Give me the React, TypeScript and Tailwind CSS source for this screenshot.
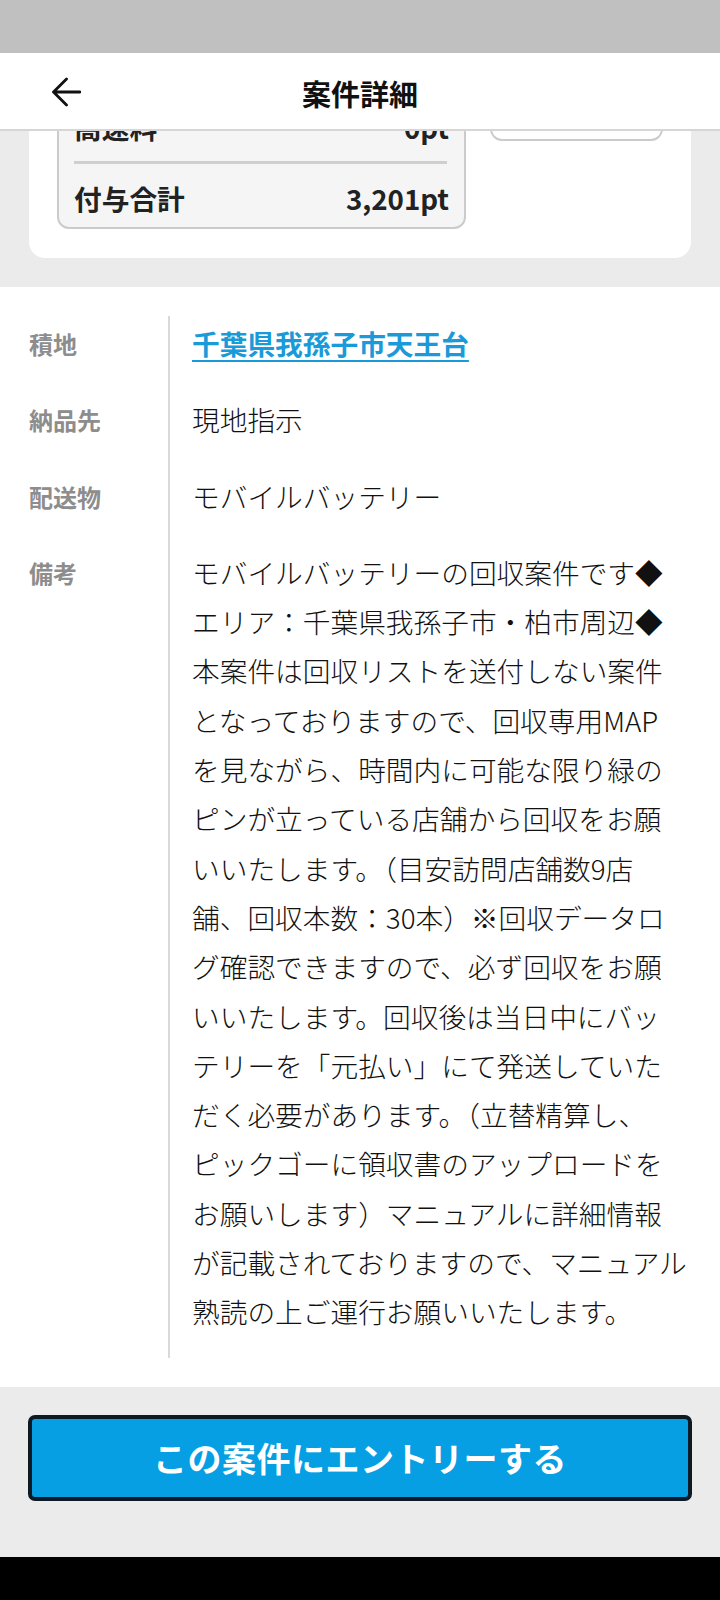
import React from 'react';

const font = { fontFamily: '"Noto Sans CJK JP", "Noto Sans", sans-serif' };

const remarkLines = [
  'モバイルバッテリーの回収案件です◆',
  'エリア：千葉県我孫子市・柏市周辺◆',
  '本案件は回収リストを送付しない案件',
  'となっておりますので、回収専用MAP',
  'を見ながら、時間内に可能な限り緑の',
  'ピンが立っている店舗から回収をお願',
  'いいたします。（目安訪問店舗数9店',
  '舗、回収本数：30本）※回収データロ',
  'グ確認できますので、必ず回収をお願',
  'いいたします。回収後は当日中にバッ',
  'テリーを「元払い」にて発送していた',
  'だく必要があります。（立替精算し、',
  'ピックゴーに領収書のアップロードを',
  'お願いします）マニュアルに詳細情報',
  'が記載されておりますので、マニュアル',
  '熟読の上ご運行お願いいたします。',
];

const BackArrow: React.FC = () => (
  <svg width="30" height="30" viewBox="0 0 30 30" fill="none">
    <path d="M29 15H3M15.5 2L2.5 15L15.5 28" stroke="#111" strokeWidth="2.8" strokeLinecap="round" strokeLinejoin="round" />
  </svg>
);

interface RowProps {
  label: string;
  last?: boolean;
  children: React.ReactNode;
}

const DetailRow: React.FC<RowProps> = ({ label, last, children }) => (
  <div className="flex">
    <div className="w-[168px] shrink-0 pl-[29px] pt-[3px]">
      <div className="text-[24px] leading-[49px] font-bold text-[#8d8d8d]">{label}</div>
    </div>
    <div
      className={`flex-1 border-l-2 border-[#d9d9d9] pl-[22px] pt-[3px] text-[27.7px] leading-[49.3px] font-light text-[#111] ${
        last ? 'pb-[21px]' : 'pb-[24px]'
      }`}
    >
      {children}
    </div>
  </div>
);

const App: React.FC = () => {
  return (
    <div className="w-[720px] h-[1600px] flex flex-col bg-[#ebebeb] overflow-hidden" style={font}>
      {/* status bar */}
      <div className="h-[53px] bg-[#c0c0c0] shrink-0" />

      {/* header */}
      <div className="h-[78px] shrink-0 bg-white border-b-2 border-[#d6d6d6] flex items-center">
        <div className="pl-[51px] pt-[2px]">
          <BackArrow />
        </div>
        <div className="flex-1 text-center pr-[81px] pt-[5px] text-[29px] font-bold text-[#111]">案件詳細</div>
      </div>

      {/* reward card, scrolled so its upper part sits under the header */}
      <div className="h-[156px] shrink-0 overflow-hidden">
        <div className="-mt-[63px] mx-[29px] bg-white rounded-[16px] px-[28px] pt-[28px] pb-[29px] flex items-start gap-[24px]">
          <div className="w-[409px] bg-[#f5f5f5] border-2 border-[#cbcbcb] rounded-[12px] px-[15px] py-[9px]">
            <div className="flex justify-between text-[27.7px] leading-[40px] font-bold text-[#222]">
              <span>高速料</span>
              <span>0pt</span>
            </div>
            <div className="h-[3px] bg-[#cfcfcf] my-[14px] mr-[2px]" />
            <div className="flex justify-between text-[27.7px] leading-[40px] font-bold text-[#222]">
              <span>付与合計</span>
              <span>3,201pt</span>
            </div>
          </div>
          <div className="w-[173px] h-[45px] border-2 border-[#cbcbcb] rounded-[12px] bg-white" />
        </div>
      </div>

      {/* details */}
      <div className="bg-white pt-[29px] pb-[29px] shrink-0">
        <DetailRow label="積地">
          <span className="font-bold text-[#1a9ad8] underline underline-offset-[5px] decoration-2">千葉県我孫子市天王台</span>
        </DetailRow>
        <DetailRow label="納品先">現地指示</DetailRow>
        <DetailRow label="配送物">モバイルバッテリー</DetailRow>
        <DetailRow label="備考" last>
          {remarkLines.map(line => (
            <div key={line} className="whitespace-nowrap">{line}</div>
          ))}
        </DetailRow>
      </div>

      {/* entry button */}
      <div className="flex-1 px-[28px] pt-[28px]">
        <button className="w-full h-[86px] rounded-[7px] border-4 border-[#0b1a24] bg-[#069fe4] text-white text-[34px] font-bold tracking-[0.5px]">
          この案件にエントリーする
        </button>
      </div>

      {/* nav bar */}
      <div className="h-[43px] bg-black shrink-0" />
    </div>
  );
};

export default App;
